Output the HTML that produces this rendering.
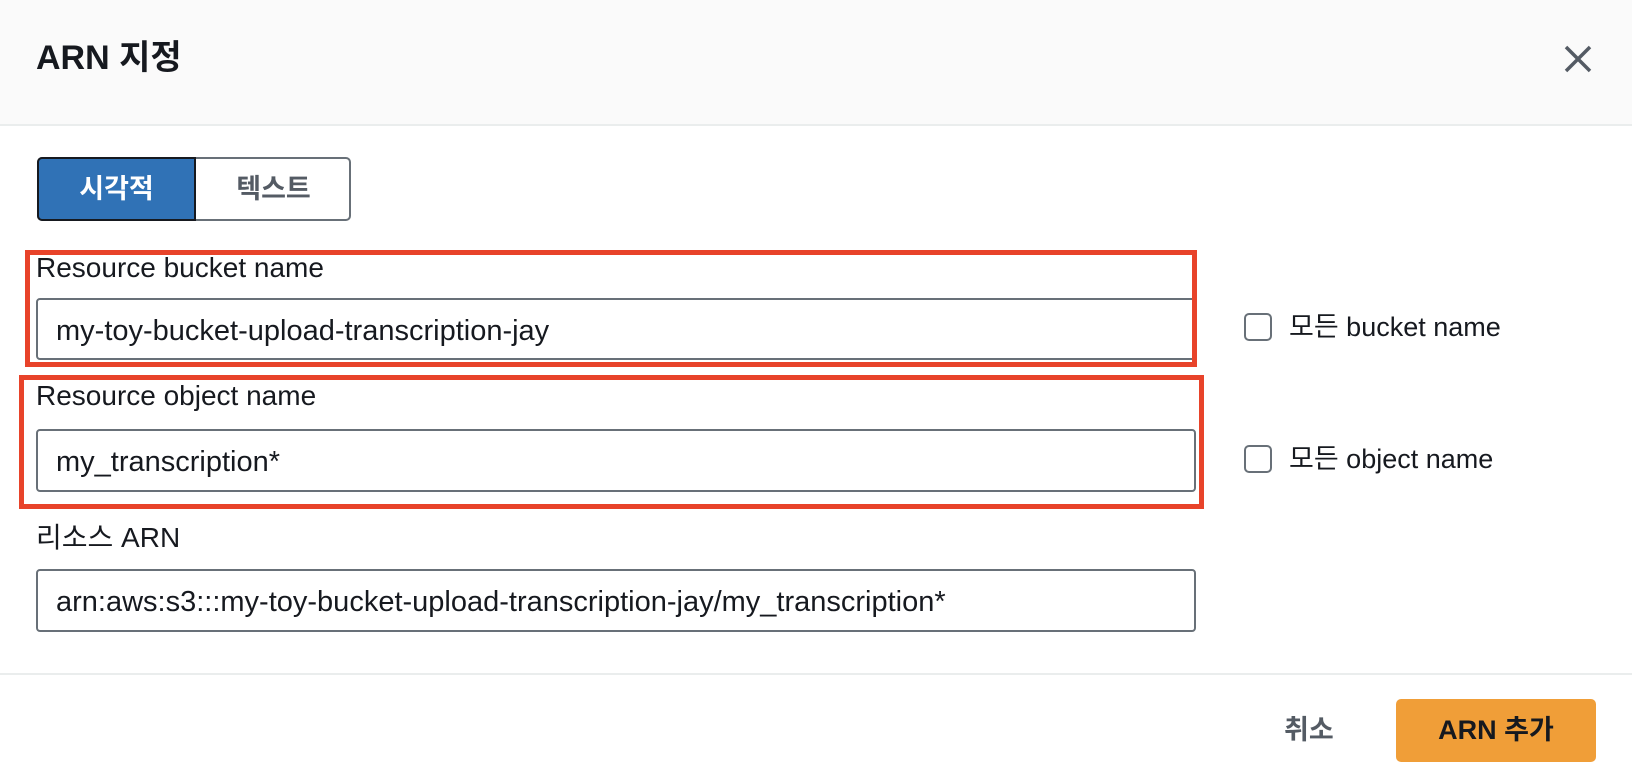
<!DOCTYPE html>
<html><head><meta charset="utf-8"><style>
*{margin:0;padding:0;box-sizing:border-box}
body{width:1632px;height:780px;background:#fff;font-family:"Liberation Sans","Noto Sans CJK KR",sans-serif;color:#16191f;position:relative;overflow:hidden}
.a{position:absolute}
.hdr{left:0;top:0;width:1632px;height:126px;background:#fafafa;border-bottom:2px solid #eaeded}
.t{font-size:27px;line-height:32px;white-space:nowrap}
.l{font-size:28px;line-height:32px;white-space:nowrap}
.v{font-size:29px;line-height:32px;white-space:nowrap}
.inp{border:2px solid #687078;border-radius:4px;background:#fff}
.red{border:5px solid #e8432a}
.cb{width:28px;height:28px;border:2px solid #687078;border-radius:5px}
</style></head><body>
<div class="a hdr"></div>
<div class="a" style="left:36px;top:38px;font-size:34px;font-weight:bold;line-height:40px">ARN 지정</div>
<svg class="a" style="left:1562px;top:43px" width="32" height="32" viewBox="0 0 32 32"><path d="M4 4L28 28M28 4L4 28" stroke="#545b64" stroke-width="3.5"/></svg>

<div class="a" style="left:37px;top:157px;width:314px;height:64px;border:2px solid #687078;border-radius:5px;background:#fff"></div>
<div class="a" style="left:37px;top:157px;width:159px;height:64px;background:#3072b6;border:2px solid #16191f;border-radius:5px 0 0 5px;color:#fff;font-weight:bold;font-size:27px;line-height:60px;text-align:center">시각적</div>
<div class="a" style="left:196px;top:157px;width:155px;height:64px;color:#545b64;font-weight:bold;font-size:27px;line-height:64px;text-align:center">텍스트</div>

<div class="a inp" style="left:36px;top:298px;width:1160px;height:62px"></div>
<div class="a red" style="left:25px;top:250px;width:1172px;height:117px;border-right:none"></div>
<div class="a" style="left:1192px;top:250px;width:5px;height:117px;background:#e8432a"></div>
<div class="a l" style="left:36px;top:252px">Resource bucket name</div>
<div class="a v" style="left:56px;top:315px">my-toy-bucket-upload-transcription-jay</div>

<div class="a red" style="left:19px;top:375px;width:1185px;height:134px"></div>
<div class="a l" style="left:36px;top:380px">Resource object name</div>
<div class="a inp" style="left:36px;top:429px;width:1160px;height:63px"></div>
<div class="a v" style="left:56px;top:446px">my_transcription*</div>

<div class="a l" style="left:36px;top:522px">리소스 ARN</div>
<div class="a inp" style="left:36px;top:569px;width:1160px;height:63px"></div>
<div class="a v" style="left:56px;top:586px">arn:aws:s3:::my-toy-bucket-upload-transcription-jay/my_transcription*</div>

<div class="a cb" style="left:1244px;top:313px"></div>
<div class="a t" style="left:1289px;top:311px">모든 bucket name</div>
<div class="a cb" style="left:1244px;top:445px"></div>
<div class="a t" style="left:1289px;top:443px">모든 object name</div>

<div class="a" style="left:0;top:673px;width:1632px;height:2px;background:#eaeded"></div>
<div class="a" style="left:1284px;top:714px;font-size:27px;font-weight:bold;color:#545b64;line-height:32px">취소</div>
<div class="a" style="left:1396px;top:699px;width:200px;height:63px;background:#f09e38;border-radius:5px;font-size:27px;font-weight:bold;line-height:63px;text-align:center">ARN 추가</div>
</body></html>
